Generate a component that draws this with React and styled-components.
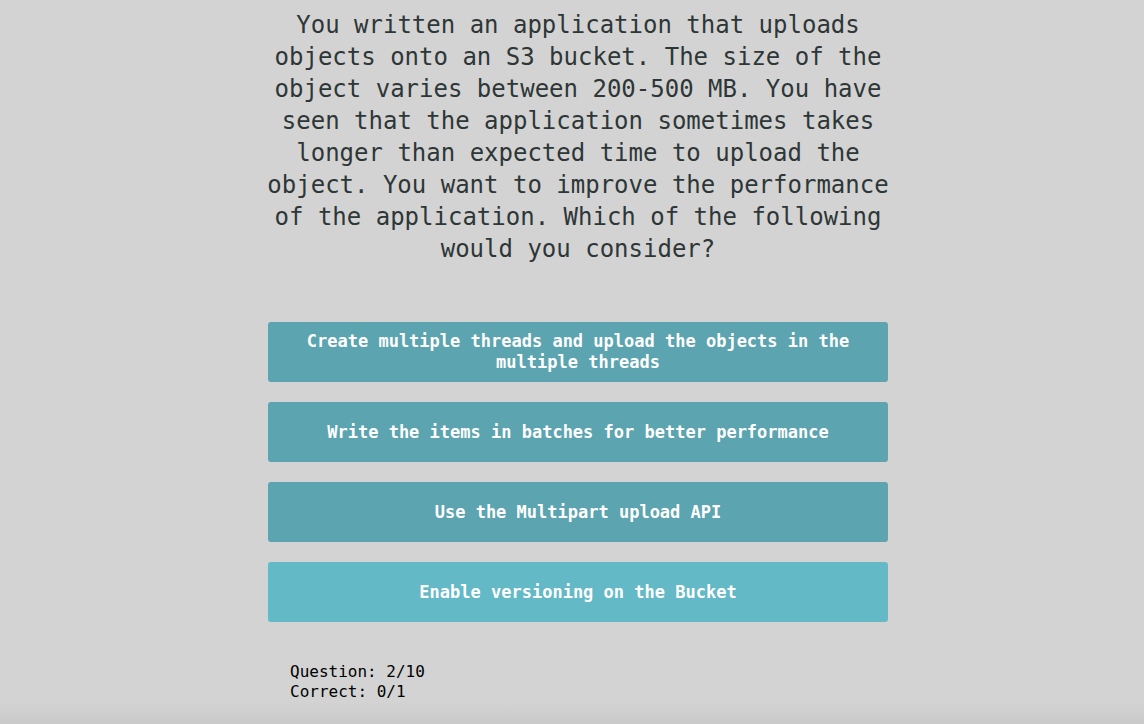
import React, { useState } from "react";
import styled, { createGlobalStyle } from "styled-components";

const QUESTION =
  "You written an application that uploads objects onto an S3 bucket. The size of the object varies between 200-500 MB. You have seen that the application sometimes takes longer than expected time to upload the object. You want to improve the performance of the application. Which of the following would you consider?";

const ANSWERS = [
  "Create multiple threads and upload the objects in the multiple threads",
  "Write the items in batches for better performance",
  "Use the Multipart upload API",
  "Enable versioning on the Bucket",
];

const App = () => {
  const [hovered] = useState(3);

  return (
    <>
      <GlobalStyle />
      <Page>
        <Quiz>
          <Question>{QUESTION}</Question>
          <Answers>
            {ANSWERS.map((a, i) => (
              <AnswerBtn key={a} $hover={hovered === i}>
                {a}
              </AnswerBtn>
            ))}
          </Answers>
          <Stats>
            <div>Question: 2/10</div>
            <div>Correct: 0/1</div>
          </Stats>
        </Quiz>
      </Page>
    </>
  );
};

// ── Styled ──

const GlobalStyle = createGlobalStyle`
  html, body {
    margin: 0;
    padding: 0;
    background: #d3d3d3;
  }
  body {
    font-family: "DejaVu Sans Mono", "Liberation Mono", monospace;
  }
`;

const Page = styled.div`
  min-height: 100vh;
  box-sizing: border-box;
  padding: 9px 0 0 12px;
  background: linear-gradient(to bottom, #d3d3d3 calc(100% - 22px), #c9c9c9 100%);
`;

const Quiz = styled.div`
  width: 620px;
  margin: 0 auto;
  display: flex;
  flex-direction: column;
`;

const Question = styled.h1`
  margin: 0 -8px;
  font-size: 24px;
  line-height: 32px;
  font-weight: normal;
  text-align: center;
  color: #2e3636;
`;

const Answers = styled.div`
  margin-top: 57px;
  display: flex;
  flex-direction: column;
  gap: 20px;
`;

const AnswerBtn = styled.button`
  height: 60px;
  padding: 0 20px;
  border: none;
  border-radius: 3px;
  background: ${(p) => (p.$hover ? "#63b9c5" : "#5ba4b0")};
  color: #fff;
  font-family: inherit;
  font-size: 17px;
  font-weight: bold;
  line-height: 21px;
  text-align: center;
  cursor: pointer;
`;

const Stats = styled.div`
  margin-top: 40px;
  padding-left: 22px;
  font-size: 16px;
  line-height: 20px;
  color: #000;
`;

export default App;
